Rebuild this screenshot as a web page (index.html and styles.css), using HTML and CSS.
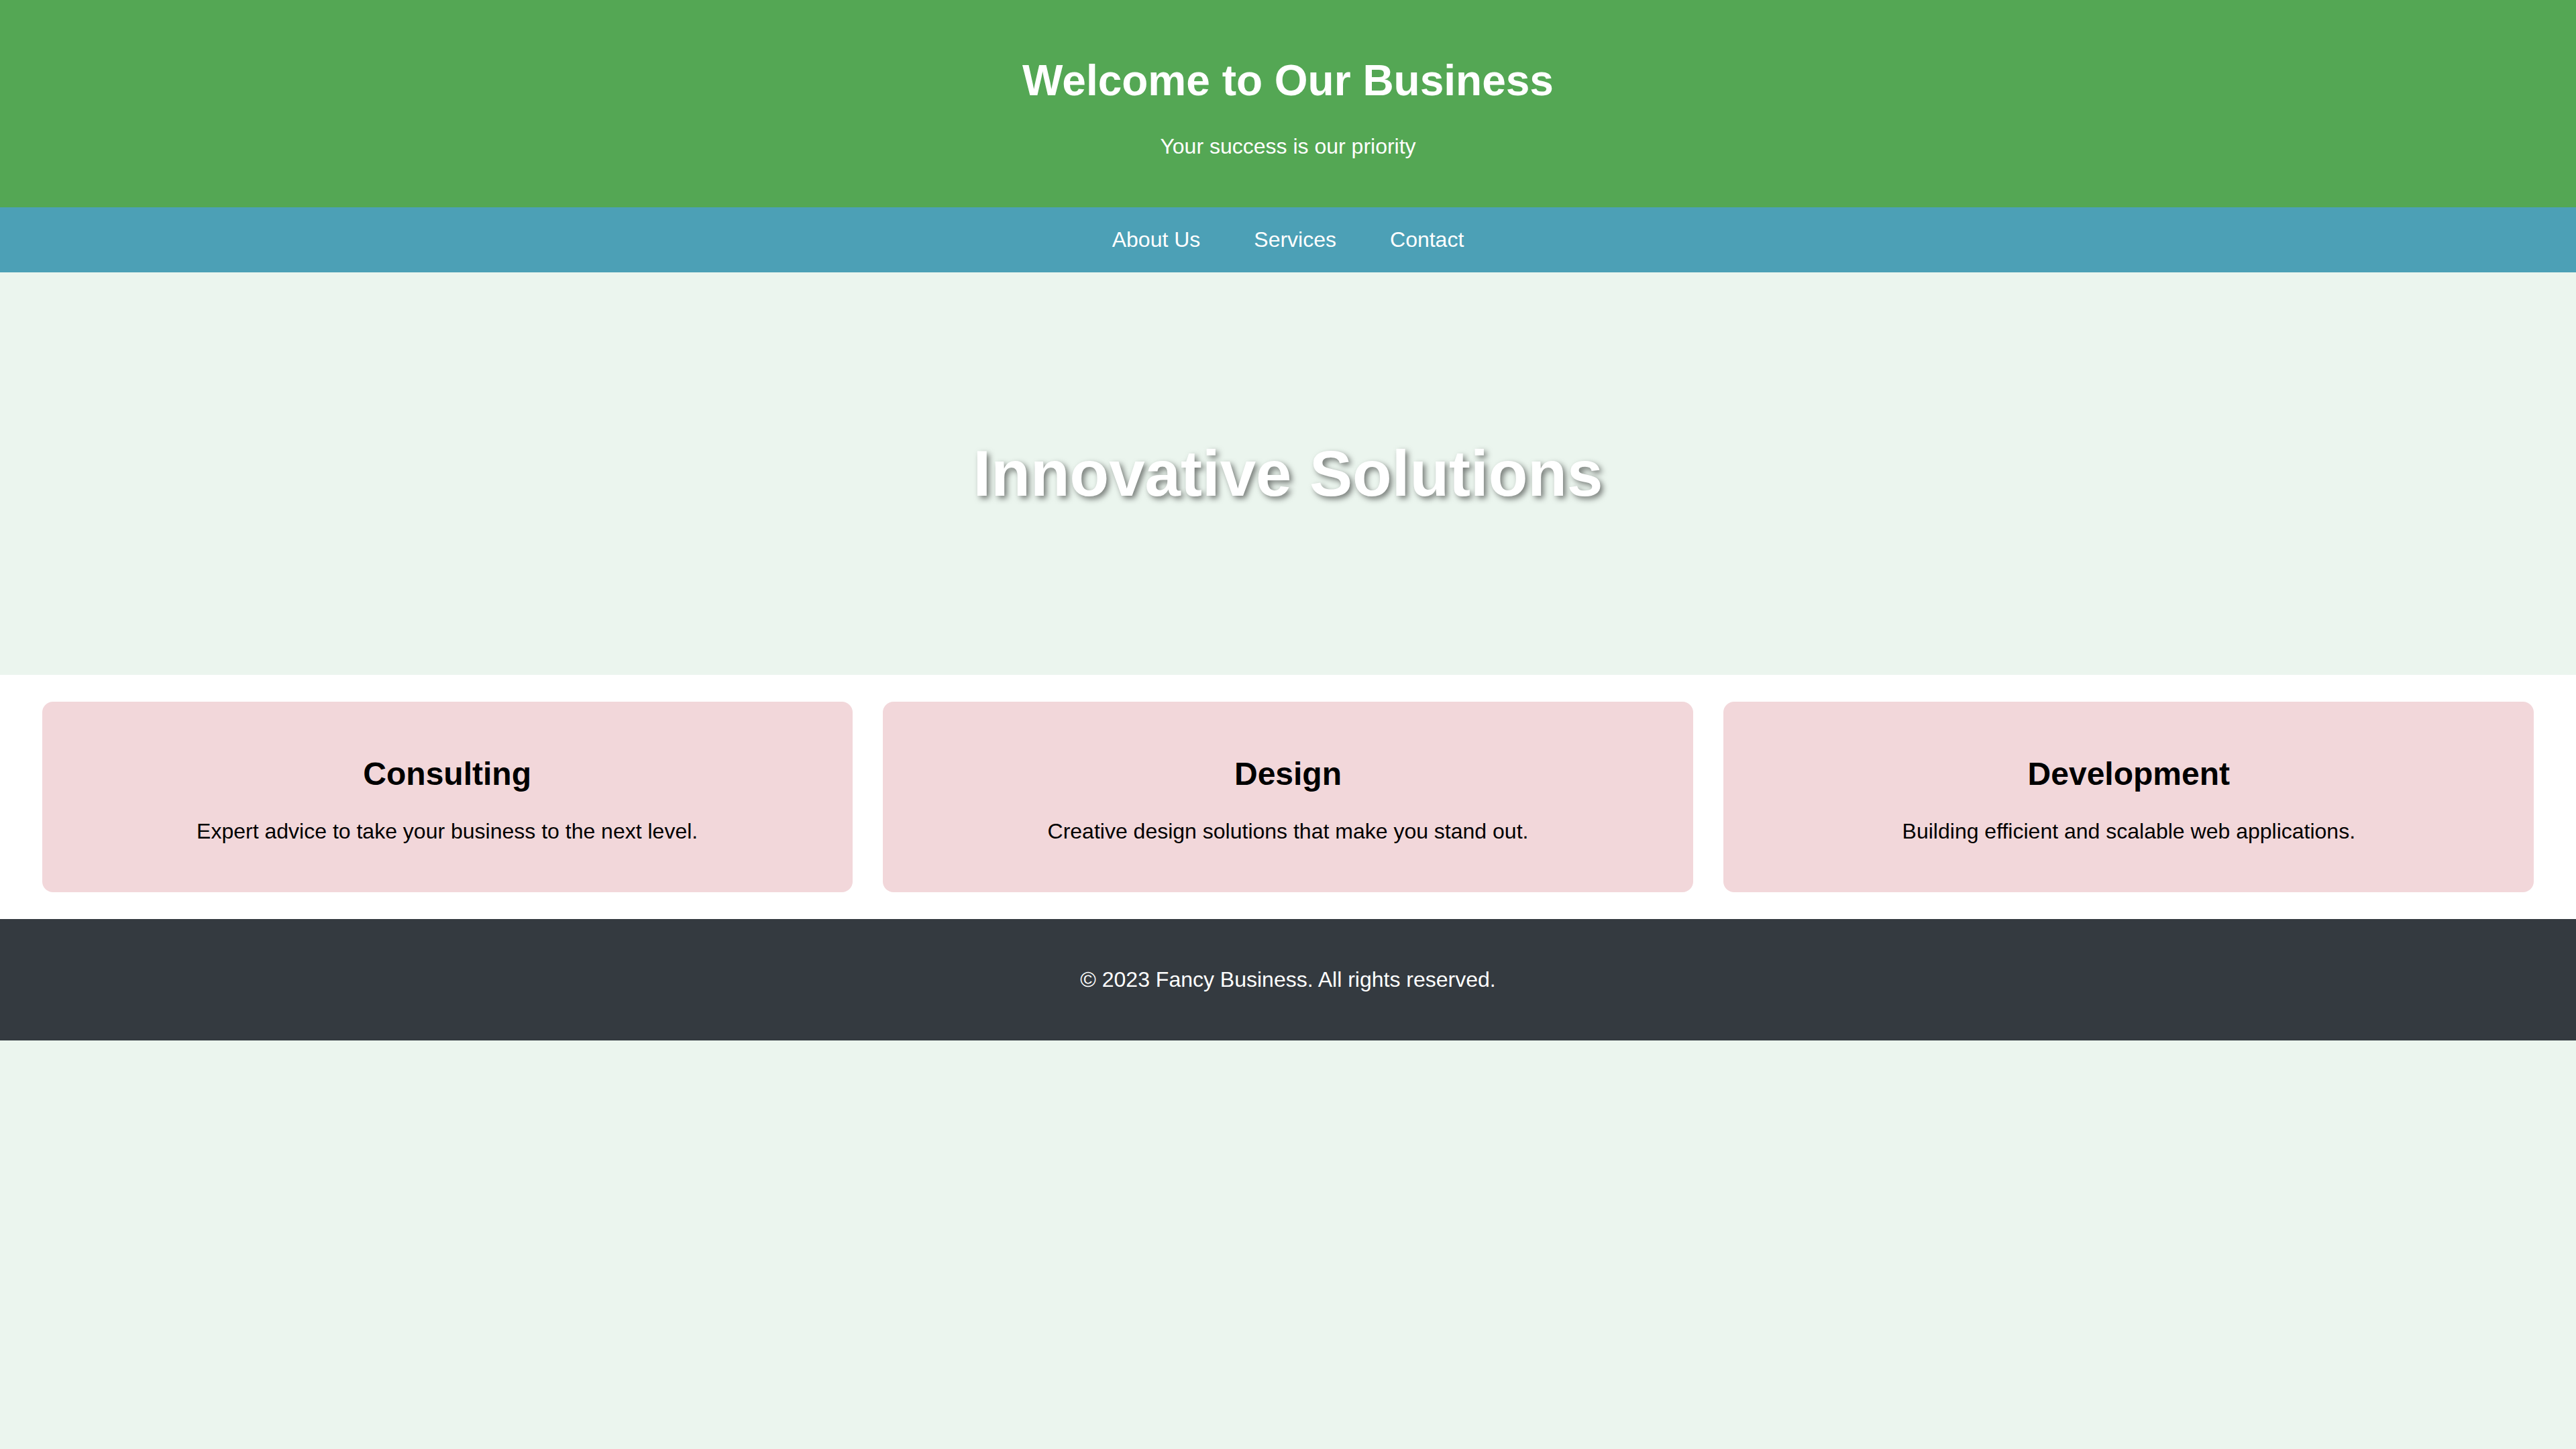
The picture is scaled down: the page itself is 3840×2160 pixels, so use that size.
FILE: index.html
```html
<!DOCTYPE html>
<html lang="en">
<head>
<meta charset="UTF-8">
<title>Fancy Business</title>
<link rel="stylesheet" href="styles.css">
</head>
<body>
<header class="site-header">
  <h1 class="site-title">Welcome to Our Business</h1>
  <p class="site-tagline">Your success is our priority</p>
</header>
<nav class="site-nav">
  <a class="nav-link" href="#about">About Us</a>
  <a class="nav-link" href="#services">Services</a>
  <a class="nav-link" href="#contact">Contact</a>
</nav>
<section class="hero">
  <h2 class="hero-title">Innovative Solutions</h2>
</section>
<section class="services">
  <div class="card">
    <h2 class="card-title">Consulting</h2>
    <p class="card-text">Expert advice to take your business to the next level.</p>
  </div>
  <div class="card">
    <h2 class="card-title">Design</h2>
    <p class="card-text">Creative design solutions that make you stand out.</p>
  </div>
  <div class="card">
    <h2 class="card-title">Development</h2>
    <p class="card-text">Building efficient and scalable web applications.</p>
  </div>
</section>
<footer class="site-footer">
  <p class="footer-text">&copy; 2023 Fancy Business. All rights reserved.</p>
</footer>
</body>
</html>
```

FILE: styles.css
```css
html, body {
  margin: 0;
  padding: 0;
}

body {
  font-family: "Liberation Sans", Arial, Helvetica, sans-serif;
  font-size: 32px;
  background: #ebf5ee;
  color: #000;
}

.site-header {
  background: #54a754;
  color: #fff;
  text-align: center;
  padding: 40px;
}

.site-title {
  font-size: 64px;
  font-weight: bold;
  margin: 43px 0;
  line-height: normal;
}

.site-tagline {
  font-size: 32px;
  margin: 32px 0;
}

.site-nav {
  background: #4ca0b6;
  display: flex;
  justify-content: center;
  gap: 80px;
  padding: 30px 0;
  line-height: normal;
}

.nav-link {
  color: #fff;
  text-decoration: none;
  font-size: 32px;
}

.hero {
  height: 600px;
  display: flex;
  align-items: center;
  justify-content: center;
}

.hero-title {
  margin: 0;
  font-size: 96px;
  font-weight: bold;
  color: #fff;
  text-shadow: 4px 4px 8px rgba(0, 0, 0, 0.5);
}

.services {
  background: #fff;
  display: flex;
  justify-content: space-around;
  padding: 40px;
}

.card {
  width: 30%;
  padding: 40px;
  background: #f2d7da;
  border-radius: 16px;
  text-align: center;
}

.card-title {
  font-size: 48px;
  font-weight: bold;
  margin: 40px 0;
}

.card-text {
  font-size: 32px;
  margin: 32px 0;
}

.site-footer {
  background: #343a40;
  color: #fff;
  text-align: center;
  padding: 40px;
}

.footer-text {
  margin: 32px 0;
  font-size: 32px;
}
```
